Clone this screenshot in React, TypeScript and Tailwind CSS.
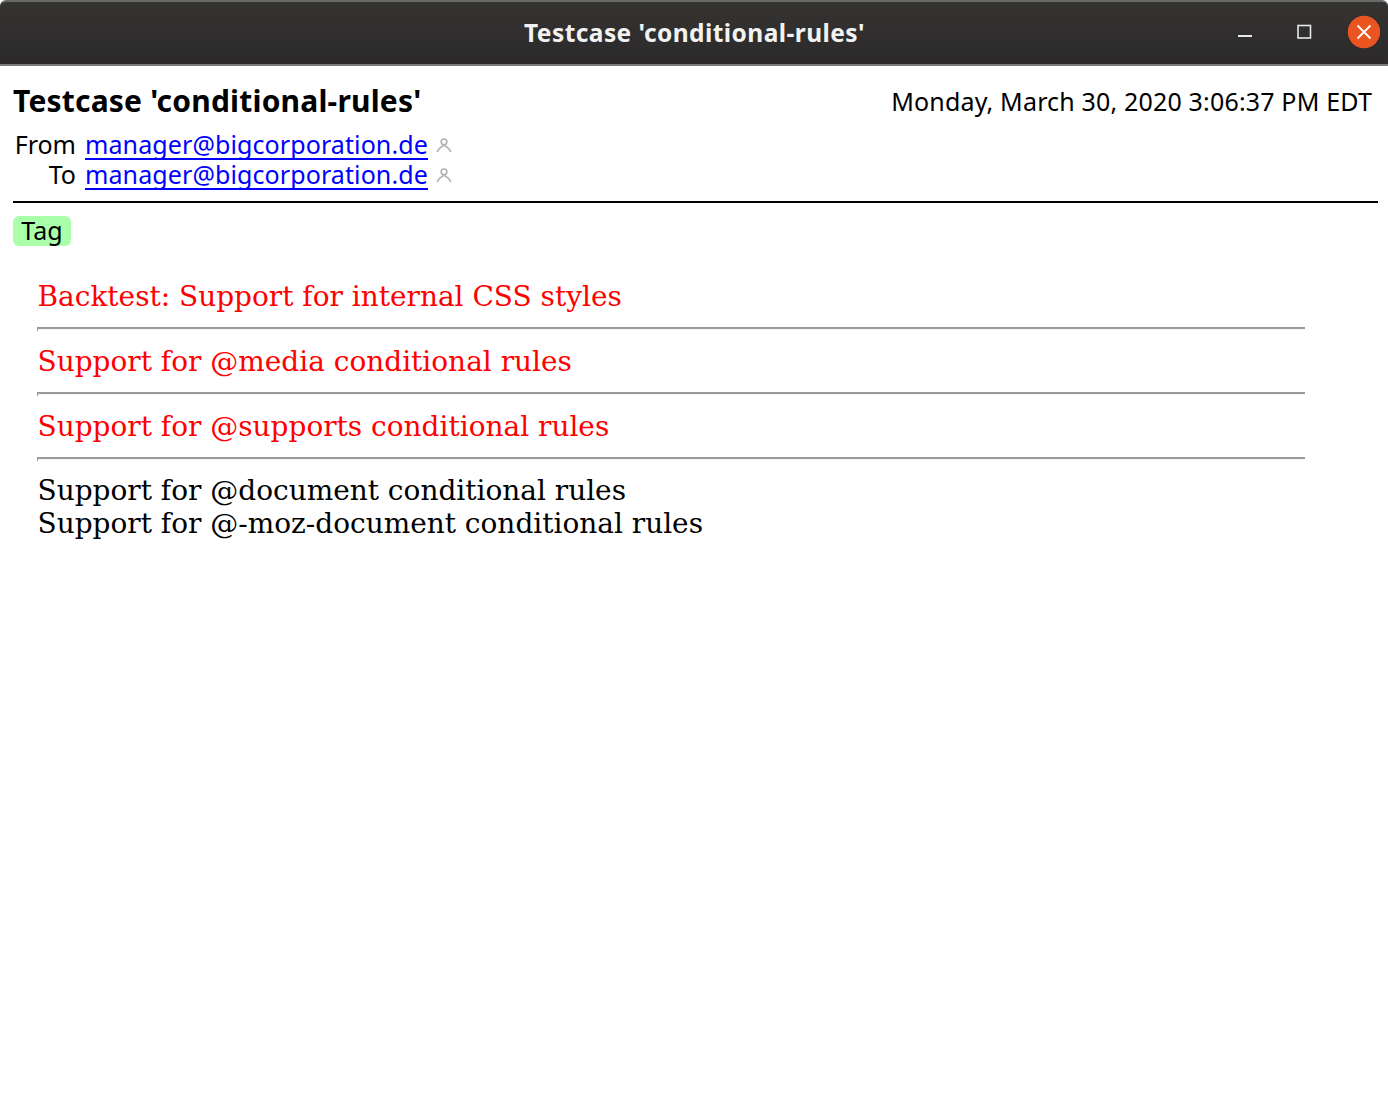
import React from "react";

function Contact() {
  return (
    <svg className="ml-[8px] h-[16px] w-[16px]" viewBox="0 0 16 16" fill="none" stroke="#b0b0b0" strokeWidth="1.5">
      <circle cx="8" cy="4.8" r="2.9" />
      <path d="M1.3 15C2 12.2 3.6 10.6 6.8 9.2V7.4M14.7 15C14 12.2 12.4 10.6 9.2 9.2V7.4" />
    </svg>
  );
}

function AddressRow({ label, address }: { label: string; address: string }) {
  return (
    <div className="flex h-[30px] items-center text-[25px] whitespace-nowrap">
      <span className="h-[30px] w-[63px] text-right leading-[28px]">{label}</span>
      <a className="ml-[9px] h-[29px] w-[343px] overflow-hidden border-b-2 border-[#0000ff] leading-[26px] tracking-[0.1px] text-[#0000ff]">
        {address}
      </a>
      <Contact />
    </div>
  );
}

function Rule() {
  return <div className="-ml-px h-[4px] w-[1268px] border-t-2 border-l border-[#9a9a9a] bg-linear-to-b from-[#eeeeee] to-white to-50%" />;
}

export default function App() {
  return (
    <div className="h-[1108px] w-[1388px] overflow-hidden bg-white font-['Noto_Sans',sans-serif] text-black">
      <header className="grid h-[66px] grid-cols-[1fr_auto_1fr] rounded-t-[6px] border-t-2 border-b-2 border-t-[#6a6a68] border-b-[#7c7a7a] bg-linear-to-b from-[#353432] to-[#2b292a]">
        <span />
        <h1 className="ml-px text-[24.5px] leading-[62px] font-bold tracking-[0.43px] whitespace-nowrap text-[#f2f2f2]">Testcase 'conditional-rules'</h1>
        <div className="flex h-[60px] items-center justify-end pr-[8px]">
          <svg className="h-[34px] w-[144px]" viewBox="0 0 144 34" fill="none">
            <path d="M2 21H16" stroke="#e8e8e8" strokeWidth="2" />
            <rect x="62" y="10.5" width="12.5" height="12.5" stroke="#e8e8e8" strokeWidth="1.6" />
            <circle cx="128" cy="17" r="16.2" fill="#e95420" />
            <path d="M121.5 10.5L134.5 23.5M134.5 10.5L121.5 23.5" stroke="white" strokeWidth="1.8" />
          </svg>
        </div>
      </header>
      <div className="ml-[13px] flex h-[64px] w-[1359px] items-center justify-between pt-[5px] whitespace-nowrap">
        <h2 className="text-[30px] leading-[40px] font-bold tracking-[0.2px]">Testcase 'conditional-rules'</h2>
        <span className="text-[25px] leading-[36px] tracking-[0.17px]">Monday, March 30, 2020 3:06:37 PM EDT</span>
      </div>
      <div className="ml-[13px]">
        <AddressRow label="From" address="manager@bigcorporation.de" />
        <AddressRow label="To" address="manager@bigcorporation.de" />
      </div>
      <div className="mt-[11px] ml-[13px] h-[2px] w-[1365px] bg-black" />
      <div className="mt-[13px] ml-[13px] flex h-[30px] w-[58px] items-center justify-center rounded-[6px] bg-[#aaffaa] text-[25px]">Tag</div>
      <main className="mt-[34px] ml-[37.5px] font-['DejaVu_Serif',serif] text-[27.97px] leading-[33px] whitespace-nowrap">
        <div className="text-[#ff0000]">
          <p className="mb-[14px]">Backtest: Support for internal CSS styles</p>
          <Rule />
          <p className="my-[14px]">Support for @media conditional rules</p>
          <Rule />
          <p className="my-[14px]">Support for @supports conditional rules</p>
          <Rule />
        </div>
        <p className="mt-[13px]">Support for @document conditional rules</p>
        <p>Support for @-moz-document conditional rules</p>
      </main>
    </div>
  );
}
